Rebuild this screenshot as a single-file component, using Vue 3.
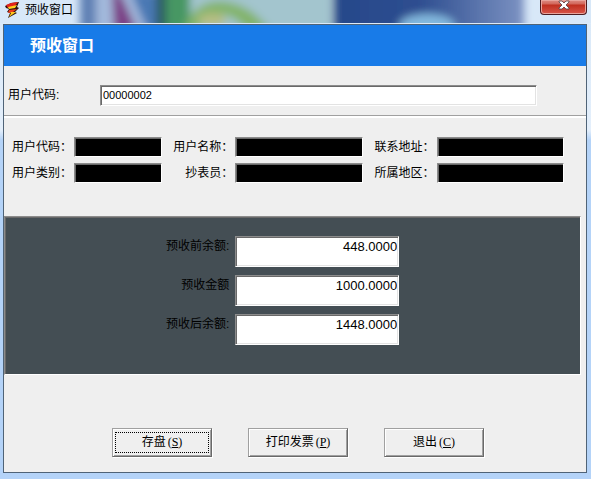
<script setup>
import { ref } from 'vue'

const userCode = ref('00000002')

// 用户信息，三列两行
const infoList = [
  { id: 'code', label: '用户代码：' },
  { id: 'name', label: '用户名称：' },
  { id: 'address', label: '联系地址：' },
  { id: 'type', label: '用户类别：' },
  { id: 'reader', label: '抄表员：' },
  { id: 'area', label: '所属地区：' },
]

// 金额
const amounts = ref([
  { id: 'before', label: '预收前余额:', value: '448.0000' },
  { id: 'amount', label: '预收金额', value: '1000.0000' },
  { id: 'after', label: '预收后余额:', value: '1448.0000' },
])

const buttons = [
  { text: '存盘', hotkey: 'S' },
  { text: '打印发票', hotkey: 'P' },
  { text: '退出', hotkey: 'C' },
]
const focused = ref('S')
</script>

<template>
  <div class="window">
    <div class="title-bar">
      <svg class="glass" viewBox="0 0 591 24" preserveAspectRatio="none" aria-hidden="true">
        <defs>
          <filter id="soft" x="-10%" y="-50%" width="120%" height="200%">
            <feGaussianBlur stdDeviation="4" />
          </filter>
          <linearGradient id="navy">
            <stop offset="0" stop-color="#26488a" />
            <stop offset="0.45" stop-color="#2e4e90" />
            <stop offset="1" stop-color="#7c92c2" />
          </linearGradient>
        </defs>
        <rect width="591" height="24" fill="#d8e8f8" />
        <g filter="url(#soft)">
          <rect x="80" y="-10" width="80" height="44" fill="#a3b9dc" />
          <rect x="80" y="-10" width="16" height="44" fill="#5f80b4" />
          <path d="M112 -8h8l18 40h-24z" fill="#7b3f86" />
          <path d="M130 -8h26v40h-8z" fill="#4a78b4" />
          <rect x="156" y="-10" width="14" height="44" fill="#2c5c60" />
          <rect x="166" y="-10" width="28" height="44" fill="#479763" />
          <rect x="190" y="-10" width="142" height="44" fill="#a3c5ce" />
          <path d="M184 30C190 8 208 -2 228 2s30 14 42 28h-24c-6-10-22-20-34-14s-8 8-12 14z" fill="#83b46b" />
          <ellipse cx="212" cy="20" rx="14" ry="7" fill="#b5bd82" />
          <rect x="333" y="-10" width="191" height="44" fill="url(#navy)" />
          <ellipse cx="427" cy="26" rx="28" ry="12" fill="#83b9df" />
        </g>
        <rect y="23" width="591" height="1" fill="#dcebfa" />
      </svg>
      <svg class="app-icon" viewBox="0 0 16 16" aria-hidden="true">
        <path d="M1 4l6-3 8-1-2 5 2 1-4 4 2 1-9 5 2-5-3-1 2-3-3-1z" fill="#2c1410" />
        <path d="M2 3l5-2 7-1-3 4-7 2z" fill="#e3241c" />
        <path d="M4 5l9-2-2 3-6 1z" fill="#ffd21c" />
        <path d="M5 8l8-1-4 3-5 1z" fill="#ef3b1c" />
        <path d="M6 10l6 0-7 5 2-4z" fill="#ffc61c" />
      </svg>
      <span class="title-text">预收窗口</span>
      <button class="close" type="button" aria-label="关闭">
        <svg viewBox="0 0 12 10" aria-hidden="true">
          <path d="M1 1h3l2 2 2-2h3v1L8 5l3 3v1H8L6 7 4 9H1V8l3-3-3-3z" fill="#fff" stroke="#563c40" stroke-width="0.8" />
        </svg>
      </button>
    </div>

    <main class="client">
      <h1 class="banner">预收窗口</h1>

      <div class="query">
        <label for="user-code">用户代码:</label>
        <input id="user-code" v-model="userCode" class="sunken" type="text" />
      </div>

      <div class="info">
        <template v-for="item in infoList" :key="item.id">
          <label :for="item.id">{{ item.label }}</label>
          <input :id="item.id" class="sunken" type="text" readonly />
        </template>
      </div>

      <div class="amounts">
        <div v-for="item in amounts" :key="item.id" class="amount-row">
          <label :for="item.id">{{ item.label }}</label>
          <input :id="item.id" v-model="item.value" class="sunken" type="text" />
        </div>
      </div>

      <div class="actions">
        <button
          v-for="btn in buttons"
          :key="btn.hotkey"
          type="button"
          :class="['btn', { active: btn.hotkey === focused }]"
          @click="focused = btn.hotkey"
        >
          <span class="face">{{ btn.text }}<span class="hotkey">(<u>{{ btn.hotkey }}</u>)</span></span>
        </button>
      </div>
    </main>
  </div>
</template>

<style>
body {
  margin: 0;
  background: #fff;
}
</style>

<style scoped>
.window {
  box-sizing: border-box;
  padding: 0 4px 6px 3px;
  background: linear-gradient(#d8e8f8 0, #e4effb 130px, #b4d3f8 140px, #b4d3f8 100%);
  font-family: 'Liberation Sans', 'Noto Sans CJK SC', sans-serif;
  font-size: 12px;
  line-height: 16px;
  color: #000;
  position: relative;
}

.title-bar {
  display: flex;
  align-items: flex-start;
  height: 24px;
}

.glass {
  position: absolute;
  left: 0;
  top: 0;
  width: 100%;
  height: 24px;
}

.app-icon {
  position: relative;
  width: 16px;
  height: 16px;
  margin: 2px 5px 0 1px;
}

.title-text {
  position: relative;
  flex: 1;
  margin-top: 2px;
}

.close {
  position: relative;
  display: flex;
  justify-content: center;
  width: 47px;
  height: 15px;
  padding: 0;
  border: 1px solid #4c1c20;
  border-top: 0;
  border-radius: 0 0 4px 4px;
  background: linear-gradient(#dd8d83 0, #d2665a 4px, #bf2f1f 5px, #d8564a 100%);
  box-shadow: inset 0 0 0 1px #e8a49c;
}

.close svg {
  width: 12px;
  height: 10px;
}

.client {
  border: 1px solid #4f6377;
  background: #efefef;
  position: relative;
}

.banner {
  margin: 0;
  padding-left: 26px;
  background: #187be8;
  color: #fff;
  font-size: 16px;
  line-height: 41px;
  font-weight: bold;
}

.sunken {
  box-sizing: border-box;
  min-width: 0;
  margin: 0;
  border: 1px solid;
  border-color: #8c8c8c #fff #fff #8c8c8c;
  border-radius: 0;
  outline: none;
  background: #fff;
  font-family: 'Liberation Sans', 'Noto Sans CJK SC', sans-serif;
  color: #000;
  box-shadow: inset 1px 1px 0 #696969, inset -1px -1px 0 #e3e3e3;
}

.query {
  display: flex;
  align-items: flex-start;
  padding: 19px 49px 9px 4px;
  border-bottom: 1px solid #a0a0a0;
  box-shadow: 0 2px 0 #fff;
}

.query label {
  width: 92px;
  padding-top: 2px;
}

.query .sunken {
  flex: 1;
  height: 21px;
  padding: 0 0 2px 2px;
  font-size: 11px;
}

.info {
  display: grid;
  grid-template-columns: 68px 88fr 69px 127fr 70px 127fr;
  column-gap: 2px;
  row-gap: 6px;
  padding: 21px 22px 33px 0;
}

.info label {
  padding-top: 2px;
  text-align: right;
  white-space: nowrap;
}

.info .sunken {
  width: 100%;
  height: 20px;
  background: #000;
  box-shadow: inset 1px 1px 0 #696969;
}

.amounts {
  display: flex;
  flex-direction: column;
  gap: 8px;
  margin-right: 5px;
  padding: 19px 0 29px;
  border: 1px solid;
  border-color: #8c8c8c #fff #fff #8c8c8c;
  background: #444e54;
  box-shadow: inset 1px 1px 0 #696969;
}

.amount-row {
  display: flex;
  gap: 6px;
}

.amount-row label {
  width: 39%;
  padding-top: 2px;
  text-align: right;
}

.amount-row .sunken {
  width: 164px;
  height: 31px;
  padding: 0 1px 10px;
  font-size: 13px;
  text-align: right;
}

.actions {
  display: flex;
  justify-content: center;
  gap: 36px;
  padding: 53px 0 15px 6px;
}

.btn {
  box-sizing: border-box;
  width: 100px;
  height: 29px;
  padding: 2px;
  border: 1px solid;
  border-color: #a0a0a0 #696969 #696969 #a0a0a0;
  border-radius: 0;
  outline: none;
  background: #efefef;
  box-shadow: inset 1px 1px 0 #fff, inset -1px -1px 0 #a0a0a0, 1px 1px 0 #fff;
  font-family: 'Liberation Sans', 'Noto Sans CJK SC', sans-serif;
  font-size: 12px;
  line-height: 19px;
  color: #000;
}

.face {
  display: block;
  border: 1px dotted transparent;
}

.active .face {
  border-color: #000;
}

.hotkey {
  margin-left: 2px;
  font-family: 'Liberation Serif', serif;
}
</style>
